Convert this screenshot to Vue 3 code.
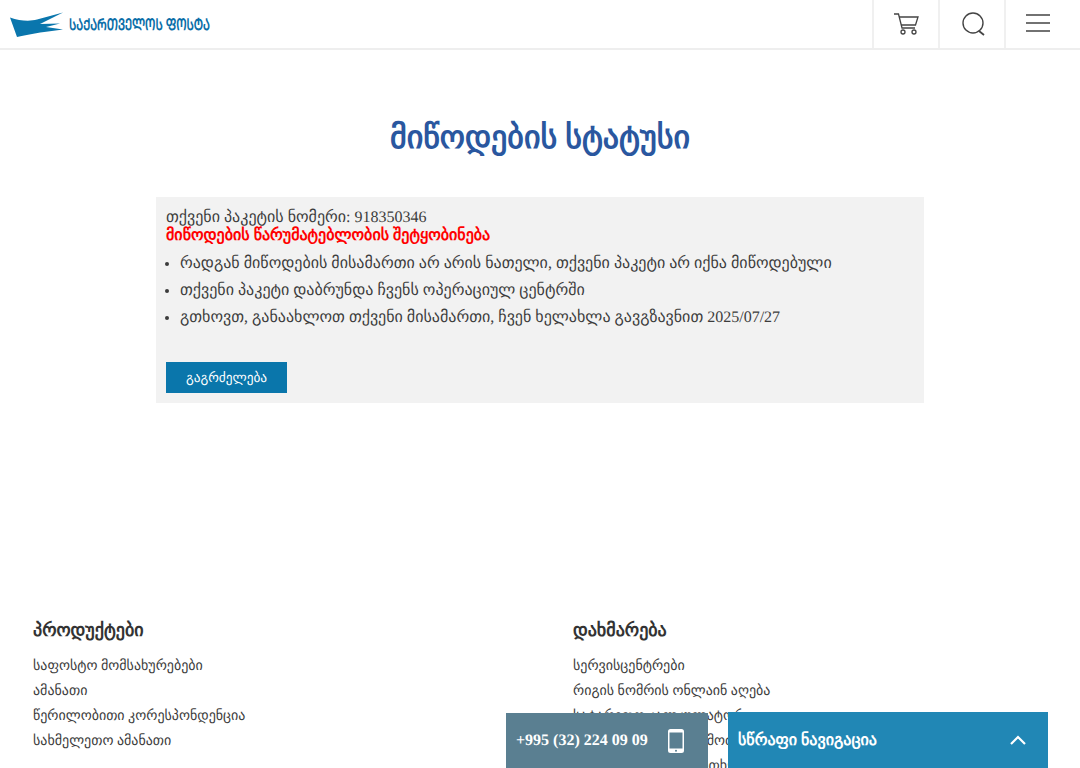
<script setup>
const products = ['საფოსტო მომსახურებები', 'ამანათი', 'წერილობითი კორესპონდენცია', 'სახმელეთო ამანათი']
const help = ['სერვისცენტრები', 'რიგის ნომრის ონლაინ აღება', 'სატარიფო კალკულატორი', 'საფოსტო ინდექსის მოძიება', 'ხშირად დასმული კითხვები']
const notes = [
  'რადგან მიწოდების მისამართი არ არის ნათელი, თქვენი პაკეტი არ იქნა მიწოდებული',
  'თქვენი პაკეტი დაბრუნდა ჩვენს ოპერაციულ ცენტრში',
  'გთხოვთ, განაახლოთ თქვენი მისამართი, ჩვენ ხელახლა გავგზავნით 2025/07/27'
]
</script>

<template>
  <div class="page">
    <header class="header">
      <a class="logo">
        <svg class="logo-mark" width="54" height="25" viewBox="0 0 54 25">
          <path d="M0 5.5 C10 9 20 9.5 27 7.5 L53 0.5 L30 12 L50 11.5 L36 15 L53 17.5 L38 19.5 C28 20.5 16 23 7 25 Z" fill="#0a76ad" />
        </svg>
        <span class="logo-text">ᲡᲐᲥᲐᲠᲗᲕᲔᲚᲝᲡ ᲤᲝᲡᲢᲐ</span>
      </a>
      <div class="tools">
        <button class="tool">
          <svg width="26" height="24" viewBox="0 0 26 24" fill="none" stroke="#444" stroke-width="1.3">
            <path d="M1 2 L5.5 2 L9 16 L22 16" />
            <path d="M6 5 L25 5 L22.5 13 L8 13" />
            <circle cx="10" cy="20" r="2" />
            <circle cx="21" cy="20" r="2" />
          </svg>
        </button>
        <button class="tool search">
          <svg width="24" height="24" viewBox="0 0 24 24" fill="none" stroke="#444" stroke-width="1.4">
            <circle cx="11" cy="11" r="10" />
            <path d="M17 19 L22 23" stroke-width="1.8" />
          </svg>
        </button>
        <button class="tool menu">
          <svg width="24" height="18" viewBox="0 0 24 18" fill="none" stroke="#444" stroke-width="1.3">
            <path d="M0 1 H24 M0 9 H24 M0 17 H24" />
          </svg>
        </button>
      </div>
    </header>

    <main class="main">
      <h1 class="title">მიწოდების სტატუსი</h1>
      <section class="status">
        <div class="line">თქვენი პაკეტის ნომერი: 918350346</div>
        <div class="alert">მიწოდების წარუმატებლობის შეტყობინება</div>
        <ul class="notes">
          <li v-for="n in notes" :key="n">{{ n }}</li>
        </ul>
        <button class="continue">გაგრძელება</button>
      </section>
    </main>

    <footer class="footer">
      <div class="col">
        <h3>პროდუქტები</h3>
        <a v-for="p in products" :key="p">{{ p }}</a>
      </div>
      <div class="col">
        <h3>დახმარება</h3>
        <a v-for="h in help" :key="h">{{ h }}</a>
      </div>
    </footer>

    <div class="phone">
      <span>+995 (32) 224 09 09</span>
      <svg width="16" height="24" viewBox="0 0 16 24">
        <path fill-rule="evenodd" fill="#fff" d="M2.5 0 H13.5 A2.5 2.5 0 0 1 16 2.5 V21.5 A2.5 2.5 0 0 1 13.5 24 H2.5 A2.5 2.5 0 0 1 0 21.5 V2.5 A2.5 2.5 0 0 1 2.5 0 Z M1.5 3.5 V19.5 H14.5 V3.5 Z" />
        <circle cx="8" cy="21.8" r="1" fill="#5a7f91" />
      </svg>
    </div>
    <div class="quick">
      <span>სწრაფი ნავიგაცია</span>
      <svg width="16" height="10" viewBox="0 0 16 10" fill="none" stroke="#fff" stroke-width="2.2">
        <path d="M1 9 L8 2 L15 9" />
      </svg>
    </div>
  </div>
</template>

<style>
html, body { margin: 0; background: #fff; overflow: hidden; }
</style>

<style scoped>
.page {
  width: 1080px;
  font-family: "Liberation Serif", serif;
  font-size: 16px;
  text-rendering: geometricPrecision;
  color: #3c3c3c;
}
.header {
  height: 48px;
  display: flex;
  justify-content: space-between;
  align-items: stretch;
  border-bottom: 2px solid #eee;
}
.logo { display: flex; align-items: center; gap: 5px; padding: 0 0 0 10px; }
.logo-mark { display: block; }
.logo-text {
  color: #0a6ea8;
  font-weight: 700;
  font-size: 16px;
  transform: scaleX(0.72);
  transform-origin: left center;
}
.tools { display: flex; }
.tool {
  width: 66px;
  padding: 0;
  background: #fff;
  border: 0;
  border-left: 2px solid #f0f0f0;
  display: flex;
  align-items: center;
  justify-content: center;
}
.tool.search { padding-left: 4px; }
.tool.menu { width: 76px; padding: 0 10px 2px 0; }
.main { padding: 0 156px; }
.title {
  margin: 0;
  padding-top: 64px;
  height: 83px;
  text-align: center;
  font-size: 32px;
  line-height: 46px;
  font-weight: 700;
  color: #2a579f;
  box-sizing: content-box;
}
.status { padding: 12px 10px 10px; background: #f2f2f2; height: 184px; }
.line, .alert { line-height: 18px; }
.alert { color: #f00; font-weight: 700; }
.notes { margin: 5px 0 0; padding: 0 0 0 14px; line-height: 27px; }
.continue {
  display: block;
  margin-top: 31px;
  width: 121px;
  height: 31px;
  padding: 0;
  border: 0;
  background: #0a76ab;
  color: #fff;
  font: 13.333px "Liberation Serif", serif;
  text-rendering: geometricPrecision;
}
.footer { display: flex; padding: 214px 0 0 33px; }
.col { flex: none; width: 540px; display: flex; flex-direction: column; }
.col h3 { margin: 0 0 11px; font-size: 18px; line-height: 26px; font-weight: 700; color: #333; }
.col a { font-size: 14px; line-height: 25px; color: #3c3c3c; }
.phone {
  position: fixed;
  left: 506px;
  top: 713px;
  width: 202px;
  height: 55px;
  box-sizing: border-box;
  padding: 0 24px 0 10px;
  background: #5a7f91;
  color: #fff;
  font-weight: 700;
  font-size: 16px;
  display: flex;
  align-items: center;
  justify-content: space-between;
}
.quick {
  position: fixed;
  left: 728px;
  top: 712px;
  width: 320px;
  height: 56px;
  box-sizing: border-box;
  padding: 0 22px 0 10px;
  background: #2187b5;
  color: #fff;
  font-weight: 700;
  font-size: 16px;
  display: flex;
  align-items: center;
  justify-content: space-between;
}
</style>
